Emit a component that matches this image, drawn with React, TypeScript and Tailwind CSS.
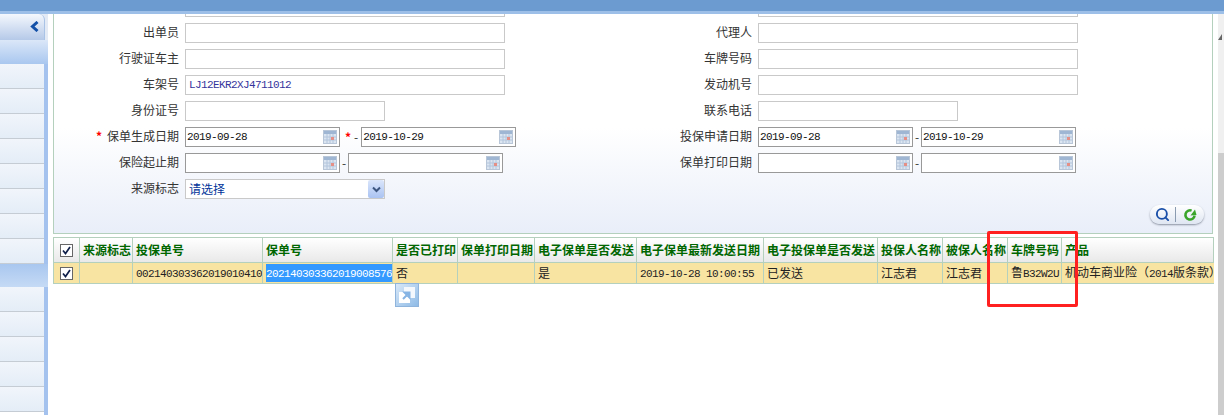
import React from 'react';
import { Search } from 'lucide-react';

const columns = [
  { title: '', width: 26 },
  { title: '来源标志', width: 53 },
  { title: '投保单号', width: 130 },
  { title: '保单号', width: 130 },
  { title: '是否已打印', width: 65 },
  { title: '保单打印日期', width: 77 },
  { title: '电子保单是否发送', width: 102 },
  { title: '电子保单最新发送日期', width: 127 },
  { title: '电子投保单是否发送', width: 114 },
  { title: '投保人名称', width: 65 },
  { title: '被保人名称', width: 65 },
  { title: '车牌号码', width: 54 },
  { title: '产品', width: 152 },
];

function Mono({ children }: { children: React.ReactNode }) {
  return <span className="font-['Liberation_Mono','Noto_Sans_CJK_SC',monospace] text-[11px] font-normal tracking-[-0.6px]">{children}</span>;
}

function CalendarIcon() {
  return (
    <svg width="14" height="14" viewBox="0 0 14 14" className="shrink-0">
      <rect x="0.5" y="0.5" width="13" height="13" fill="#dbe5f1" stroke="#b8c6d8" />
      <rect x="1" y="1" width="12" height="3" fill="#9fb6d3" />
      <path d="M1 7h12M1 10h12M4 4v9M7 4v9M10 4v9" stroke="#b3c5dc" strokeWidth="1" />
      <rect x="8" y="7" width="3" height="3" fill="#e58f86" />
    </svg>
  );
}

function TickBox() {
  return (
    <span className="mx-auto flex h-[13px] w-[13px] items-center justify-center border border-[#666666] bg-white">
      <svg width="9" height="9" viewBox="0 0 9 9">
        <path d="M1 4.5 3.5 7.5 8 1" fill="none" stroke="#10204a" strokeWidth="1.7" />
      </svg>
    </span>
  );
}

function TextBox({ width = 320, value, blue }: { width?: number; value?: string; blue?: boolean }) {
  return (
    <div
      className={`flex h-5 shrink-0 items-center border border-[#c9c9c9] bg-white px-[3px] ${blue ? 'text-[#34349c]' : ''}`}
      style={{ width }}
    >
      {value && <Mono>{value}</Mono>}
    </div>
  );
}

function DateBox({ value, width = 155 }: { value?: string; width?: number }) {
  return (
    <div
      className="flex h-5 shrink-0 items-center justify-between border border-[#999999] bg-white pr-[2px] pl-[1px] text-[#111111]"
      style={{ width }}
    >
      <Mono>{value}</Mono>
      <CalendarIcon />
    </div>
  );
}

function SelectBox() {
  return (
    <div className="flex h-5 w-[200px] shrink-0 items-center justify-between border border-[#c9c9c9] bg-white pl-[3px] text-[#003399]">
      <span>请选择</span>
      <span className="flex h-[18px] w-[16px] items-center justify-center rounded-[2px] bg-linear-to-b from-[#dbe6fb] to-[#aac3f2]">
        <svg width="9" height="7" viewBox="0 0 9 7">
          <path d="M1 1.5 4.5 5 8 1.5" fill="none" stroke="#3d5680" strokeWidth="2" />
        </svg>
      </span>
    </div>
  );
}

function Row({ label, star, labelWidth, children }: { label: string; star?: boolean; labelWidth: number; children: React.ReactNode }) {
  return (
    <div className="flex h-5 items-center">
      <div className="flex shrink-0 items-center justify-end pr-[6px] pb-[2px]" style={{ width: labelWidth }}>
        {star && <span className="mr-[5px] font-bold text-[#ff0000]">*</span>}
        {label}
      </div>
      {children}
    </div>
  );
}

function FormRow({ left, right }: { left: React.ReactNode; right: React.ReactNode }) {
  return (
    <div className="flex h-5">
      <div className="w-[451px] shrink-0">{left}</div>
      <div>{right}</div>
    </div>
  );
}

function SideItem() {
  return <div className="h-[25px] border-b border-[#c5ccd4] bg-linear-to-b from-[#f1f5fb] to-[#e4edf7]" />;
}

function Sidebar() {
  return (
    <div className="flex w-12 shrink-0 flex-col bg-[#e3eaf5]">
      <div className="flex h-[26px] w-[45px] items-center justify-end rounded-tr-[6px] border-r border-[#a9c3e6] bg-linear-to-b from-[#f5f8fd] to-[#b5c9e8] pr-[4px] pb-[2px]">
        <svg width="10" height="11" viewBox="0 0 10 11">
          <path d="M7.5 1 2.5 5.5 7.5 10" fill="none" stroke="#1250a8" strokeWidth="3" />
        </svg>
      </div>
      <div className="h-6 bg-linear-to-b from-[#dbe7f8] to-[#a9c7ef]" />
      <div className="border-r-4 border-[#a4c2ee] bg-white">
        {Array.from({ length: 8 }).map((_, i) => <SideItem key={i} />)}
      </div>
      <div className="h-[23px] bg-linear-to-b from-[#a9c7ef] to-[#c5daf5]" />
      <div className="flex-1 border-r-4 border-[#a4c2ee] bg-white">
        {Array.from({ length: 5 }).map((_, i) => <SideItem key={i} />)}
      </div>
    </div>
  );
}

function QueryForm() {
  return (
    <div className="relative flex h-[220px] flex-col overflow-hidden border-x border-b border-[#b4d0bd] bg-linear-to-b from-white from-[52%] to-[#e9eef9] text-[#333333]">
      <div className="-mt-[17px] flex flex-col gap-[6px]">
        <FormRow
          left={<Row label="" labelWidth={131}><TextBox /></Row>}
          right={<Row label="" labelWidth={253}><TextBox /></Row>}
        />
        <FormRow
          left={<Row label="出单员" labelWidth={131}><TextBox /></Row>}
          right={<Row label="代理人" labelWidth={253}><TextBox /></Row>}
        />
        <FormRow
          left={<Row label="行驶证车主" labelWidth={131}><TextBox /></Row>}
          right={<Row label="车牌号码" labelWidth={253}><TextBox /></Row>}
        />
        <FormRow
          left={<Row label="车架号" labelWidth={131}><TextBox value="LJ12EKR2XJ4711012" blue /></Row>}
          right={<Row label="发动机号" labelWidth={253}><TextBox /></Row>}
        />
        <FormRow
          left={<Row label="身份证号" labelWidth={131}><TextBox width={200} /></Row>}
          right={<Row label="联系电话" labelWidth={253}><TextBox width={200} /></Row>}
        />
        <FormRow
          left={
            <Row label="保单生成日期" star labelWidth={131}>
              <DateBox value="2019-09-28" />
              <span className="ml-[5px] font-bold text-[#ff0000]">*</span>
              <span className="mx-[3px] w-[6px] text-center">-</span>
              <DateBox value="2019-10-29" />
            </Row>
          }
          right={
            <Row label="投保申请日期" labelWidth={253}>
              <DateBox value="2019-09-28" />
              <span className="w-2 text-center">-</span>
              <DateBox value="2019-10-29" />
            </Row>
          }
        />
        <FormRow
          left={
            <Row label="保险起止期" labelWidth={131}>
              <DateBox />
              <span className="w-2 text-center">-</span>
              <DateBox />
            </Row>
          }
          right={
            <Row label="保单打印日期" labelWidth={253}>
              <DateBox />
              <span className="w-2 text-center">-</span>
              <DateBox />
            </Row>
          }
        />
        <FormRow
          left={<Row label="来源标志" labelWidth={131}><SelectBox /></Row>}
          right={null}
        />
      </div>

      <div className="mt-auto flex justify-end pr-2 pb-[9px]">
        <div className="flex h-[19px] w-[54px] items-center rounded-full bg-linear-to-b from-white to-[#dfe6f2] shadow-[0_1px_2px_rgba(60,70,90,0.55)]">
          <span className="flex w-[25px] justify-center">
            <Search size={15} strokeWidth={3} className="text-[#1a4fa8]" />
          </span>
          <span className="h-[15px] w-px bg-[#8a9bb0]" />
          <span className="flex flex-1 justify-center">
            <svg width="14" height="14" viewBox="0 0 14 14">
              <path d="M8.6 2.6A4.6 4.6 0 1 0 11.6 7.6" fill="none" stroke="#3aa52a" strokeWidth="2.6" />
              <path d="M7.5 7.5 13.5 7 12 1.5Z" fill="#3aa52a" />
            </svg>
          </span>
        </div>
      </div>
    </div>
  );
}

function ResultTable() {
  const cell = 'overflow-hidden whitespace-nowrap border border-[#b4d0bd] px-[3px]';
  return (
    <div className="relative mt-[3px]">
      <table className="w-[1160px] table-fixed border-collapse">
        <colgroup>
          {columns.map((c, i) => <col key={i} style={{ width: c.width }} />)}
        </colgroup>
        <thead>
          <tr className="h-[25px] bg-linear-to-b from-white to-[#e8e8e8]">
            {columns.map((c, i) => (
              <th key={i} className={`${cell} text-left font-bold text-[#006600]`}>
                {i === 0 ? <TickBox /> : c.title}
              </th>
            ))}
          </tr>
        </thead>
        <tbody>
          <tr className="h-[21px] bg-[#f8e4a2] text-[#222222]">
            <td className={cell}><TickBox /></td>
            <td className={cell}></td>
            <td className={cell}><Mono>002140303362019010410</Mono></td>
            <td className={cell}>
              <span className="inline-block bg-[#3399ff] py-[2px] text-white"><Mono>202140303362019008576</Mono></span>
            </td>
            <td className={cell}>否</td>
            <td className={cell}></td>
            <td className={cell}>是</td>
            <td className={cell}><Mono>2019-10-28 10:00:55</Mono></td>
            <td className={cell}>已发送</td>
            <td className={cell}>江志君</td>
            <td className={cell}>江志君</td>
            <td className={cell}>鲁<Mono>B32W2U</Mono></td>
            <td className={`${cell} border-r-0`}>机动车商业险（<Mono>2014</Mono>版条款）</td>
          </tr>
        </tbody>
      </table>

      {/* floating link button under the cell */}
      <div className="absolute top-[46px] left-[342px] h-6 w-6 border border-[#8fb4dc] bg-linear-to-br from-[#d8e8f8] to-[#8fbbe6]">
        <svg width="22" height="22" viewBox="0 0 22 22">
          <rect x="8" y="3" width="11" height="11" fill="#f4f8fd" />
          <rect x="3" y="8" width="11" height="11" fill="#ffffff" />
          <path d="M7 15 12 10M8.5 8.5H13.5V13.5Z" fill="#86b4e4" stroke="#86b4e4" strokeWidth="2" />
        </svg>
      </div>
    </div>
  );
}

export default function App() {
  return (
    <div className="relative flex h-[415px] w-[1224px] flex-col overflow-hidden bg-white font-['Noto_Sans_CJK_SC',sans-serif] text-[12px] leading-none">
      <div className="h-[14px] shrink-0 border-b-[3px] border-[#9dbfe8] bg-[#6c9bd0]" />

      <div className="flex min-h-0 flex-1">
        <Sidebar />

        <div className="ml-[5px] w-[1160px] shrink-0">
          <QueryForm />
          <ResultTable />
        </div>

        <div className="ml-[5px] flex w-[6px] shrink-0 flex-col bg-[#f0f0f0]">
          <div className="mt-[20px] h-[6px] w-[4px] bg-[#666666] [clip-path:polygon(0_100%,100%_0,100%_100%)]" />
          <div className="mt-auto h-[262px] bg-[#cdcdcd]" />
        </div>
      </div>

      {/* red annotation box */}
      <div className="absolute top-[231px] left-[987px] h-[76px] w-[91px] rounded-[2px] border-[3px] border-[#ff2020]" />
    </div>
  );
}
